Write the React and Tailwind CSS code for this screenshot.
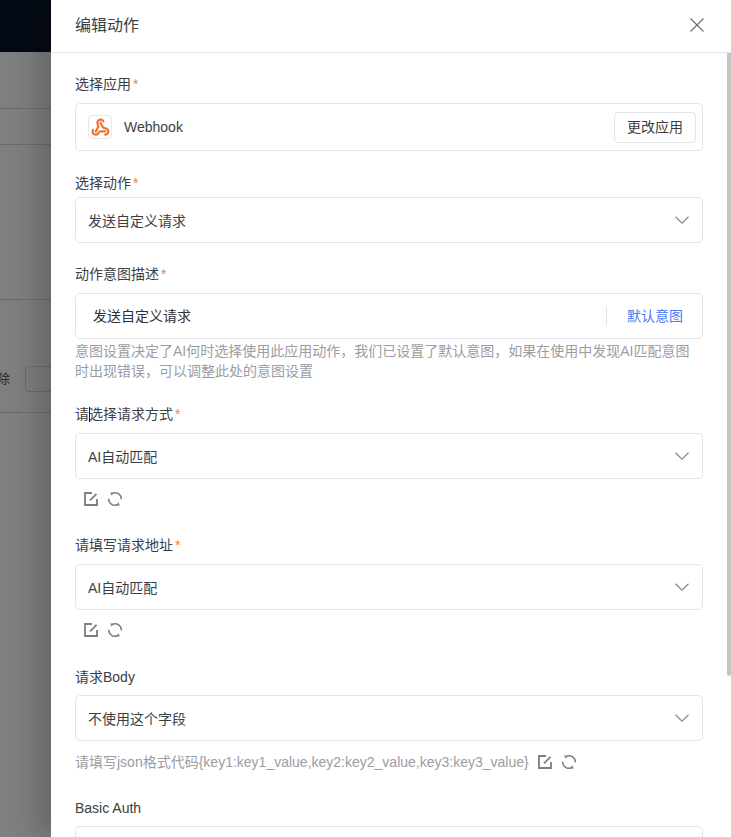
import { Webhook } from 'lucide-react'

const FONT = "font-['Liberation_Sans','Noto_Sans_CJK_SC',sans-serif]"

const Label = ({ children, required, className = 'mb-[9px]' }) => (
  <div className={`text-sm leading-5 text-[#3c3e44] h-5 ${className}`}>
    {children}
    {required && <span className="text-[#f2803d] ml-0.5">*</span>}
  </div>
)

const Chevron = () => (
  <svg width="16" height="16" viewBox="0 0 16 16" fill="none" stroke="#85888e" strokeWidth="1.2">
    <path d="M1.5 4.8 8 11.2l6.5-6.4" />
  </svg>
)

const Select = ({ value }) => (
  <div className="h-[46px] border border-[#e3e4e8] rounded-[5px] bg-white flex items-center justify-between pl-3 pr-3 text-sm text-[#3c3e44]">
    <span className="pt-0.5">{value}</span>
    <Chevron />
  </div>
)

const EditIcon = () => (
  <svg width="16" height="16" viewBox="0 0 16 16" fill="none" stroke="#7a7e85" strokeWidth="1.8">
    <path d="M9 2H2v12h12V8" />
    <path d="M7 9.300 13.500 2.800" />
  </svg>
)

const RefreshIcon = () => (
  <svg width="16" height="16" viewBox="0 0 16 16" fill="none" stroke="#7a7e85" strokeWidth="1.5">
    <path d="M5 2.500A6.300 6.300 0 0 1 14.300 8.400" />
    <path d="M11 13.500A6.300 6.300 0 0 1 1.700 7.600" />
    <path d="M3.400 1.800 5.200 2.400 4.400 4.300M12.600 14.200l-1.800-.6.800-1.900" strokeWidth="1.300" />
  </svg>
)

const Tools = () => (
  <div className="flex items-center gap-2 pl-2 mt-3 h-4">
    <EditIcon />
    <RefreshIcon />
  </div>
)

const WebhookLogo = () => (
  <div className="w-6 h-6 border border-[#e6e7ea] rounded-[4px] flex items-center justify-center">
    <Webhook size={19} color="#f0742b" strokeWidth={2.8} />
  </div>
)

export default function App() {
  return (
    <div className={`relative w-[731px] h-[837px] overflow-hidden bg-[#7e807f] ${FONT}`}>
      {/* page behind the overlay */}
      <div className="h-[52px] bg-[#040a14]" />
      <div className="h-[57px] border-b border-[#6b6d6d]" />
      <div className="h-9 border-b border-[#6b6d6d]" />
      <div className="h-[155px] border-b border-[#6b6d6d]" />
      <div className="h-[113px] border-b border-[#6b6d6d] flex items-end gap-[15px] pb-5 text-[13px] text-[#2a2a2a]">
        <span className="-ml-[3px] leading-[26px]">除</span>
        <div className="w-10 h-[26px] border border-[#6b6d6d] rounded" />
      </div>

      {/* drawer */}
      <div className="absolute top-0 left-[51px] right-0 bottom-0 bg-white shadow-[-16px_0_24px_rgba(0,0,0,0.18)] flex flex-col">
        <div className="h-[53px] shrink-0 border-b border-[#e3e4e8] flex items-center justify-between pl-6 pr-[27px]">
          <span className="text-base text-[#3c3e44]">编辑动作</span>
          <svg className="-mt-0.5" width="14" height="14" viewBox="0 0 14 14" stroke="#6a6d73" strokeWidth="1.1">
            <path d="M.5.5l13 13M13.500.5l-13 13" />
          </svg>
        </div>

        <div className="flex-1 relative overflow-hidden pl-6 pr-7 pt-[21px]">
          <div className="absolute right-0 top-0 w-1 h-[623px] rounded-b-sm bg-[#c4c4c4]" />

          <Label required>选择应用</Label>
          <div className="h-12 border border-[#e3e4e8] rounded-[5px] flex items-center justify-between pl-3 pr-[6px]">
            <div className="flex items-center gap-3 text-sm text-[#3c3e44]">
              <WebhookLogo />
              <span>Webhook</span>
            </div>
            <div className="h-[31px] px-3 border border-[#e3e4e8] rounded-[4px] flex items-center text-sm text-[#3c3e44]">更改应用</div>
          </div>

          <div className="mt-[22px]">
            <Label required className="mb-1">选择动作</Label>
            <Select value="发送自定义请求" />
          </div>

          <div className="mt-[21px]">
            <Label required>动作意图描述</Label>
            <div className="h-[46px] border border-[#e3e4e8] rounded-[5px] flex items-center justify-between pl-[17px] pr-[19px] text-sm text-[#303236]">
              <span>发送自定义请求</span>
              <div className="flex items-center">
                <div className="w-px h-5 bg-[#e3e4e8] mr-5" />
                <span className="text-[#4a7cf0]">默认意图</span>
              </div>
            </div>
            <p className="mt-[2px] text-sm leading-5 text-[#9a9da3]">意图设置决定了AI何时选择使用此应用动作，我们已设置了默认意图，如果在使用中发现AI匹配意图时出现错误，可以调整此处的意图设置</p>
          </div>

          <div className="mt-[23px] relative">
            <Label required>请选择请求方式</Label>
            {/* text cursor caught in the screenshot */}
            <div className="absolute left-[14px] top-[3px] w-px h-[15px] bg-[#1a1a1a]" />
            <Select value="AI自动匹配" />
            <Tools />
          </div>

          <div className="mt-[28px]">
            <Label required>请填写请求地址</Label>
            <Select value="AI自动匹配" />
            <Tools />
          </div>

          <div className="mt-[29px]">
            <Label className="mb-2">请求Body</Label>
            <Select value="不使用这个字段" />
            <div className="flex items-center gap-2 mt-[11px] h-5 text-sm text-[#9a9da3]">
              <span>请填写json格式代码{'{key1:key1_value,key2:key2_value,key3:key3_value}'}</span>
              <EditIcon />
              <RefreshIcon />
            </div>
          </div>

          <div className="mt-[26px]">
            <Label className="mb-2">Basic Auth</Label>
            <Select value="" />
          </div>
        </div>
      </div>
    </div>
  )
}
